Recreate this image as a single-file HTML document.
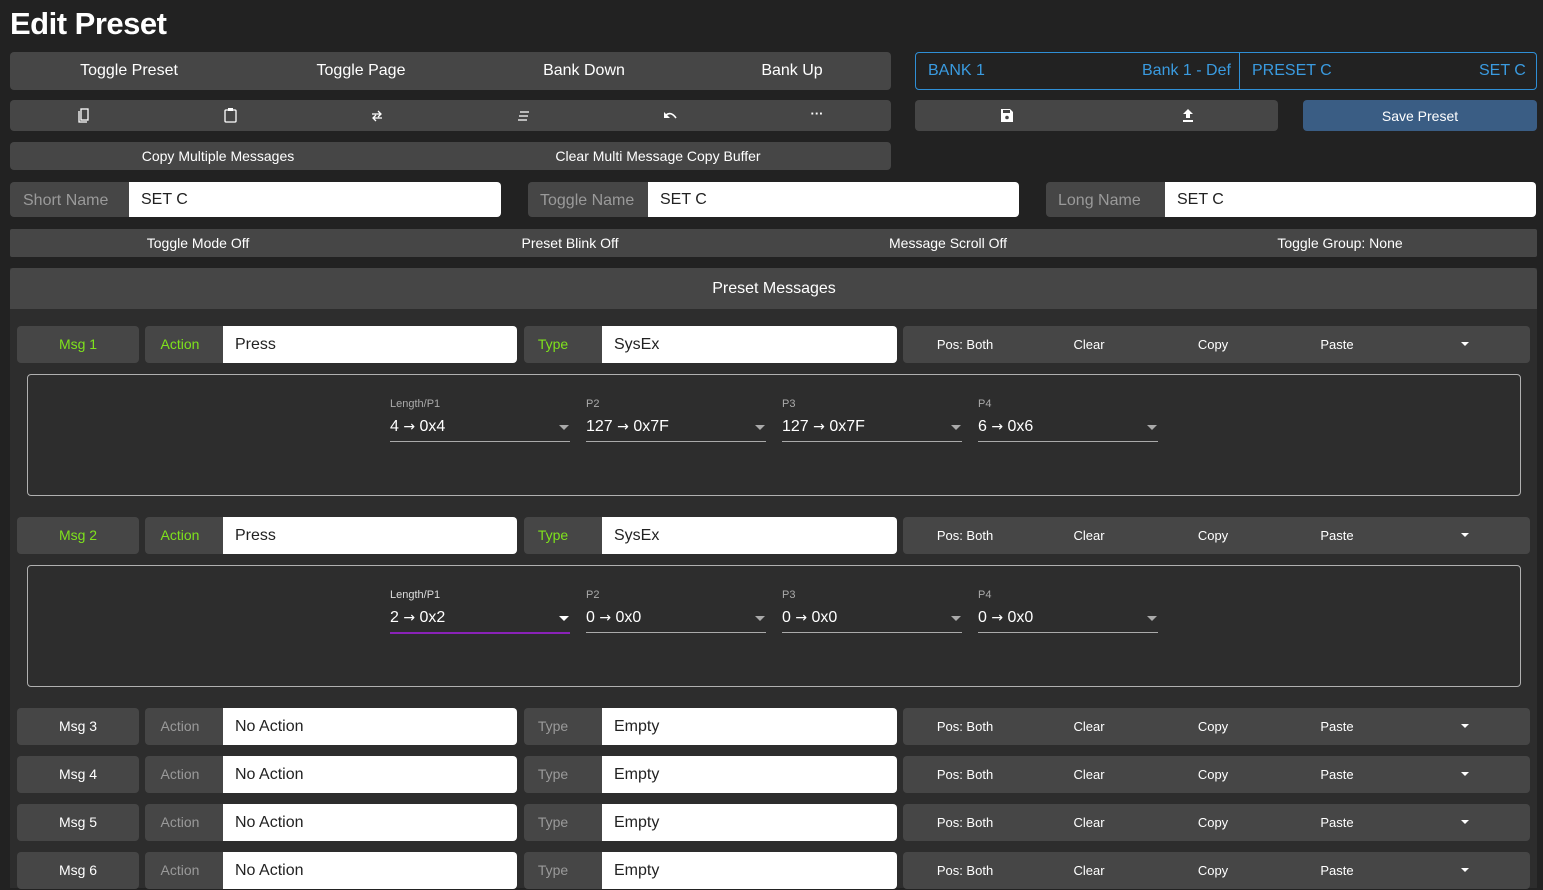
<!DOCTYPE html>
<html><head><meta charset="utf-8"><style>
*{box-sizing:border-box;margin:0;padding:0}
body{width:1543px;height:877px;overflow:hidden;background:#222;font-family:"Liberation Sans",Arial,sans-serif;color:#fff;position:relative}
.a{position:absolute}
.btn{position:absolute;background:#464646;border-radius:4px}
.c{position:absolute;transform:translateX(-50%);white-space:nowrap}
.t16{font-size:16px}
.t14{font-size:14px}
.t13{font-size:13px}
.lbl{position:absolute;background:#464646;border-radius:4px 0 0 4px;color:#9a9a9a;font-size:16px;padding-left:13px;line-height:37px}
.inp{position:absolute;background:#fff;border-radius:0 4px 4px 0;color:#222;font-size:16px;padding-left:12px;line-height:38px}
.g{color:#7ee21c}
.pl{position:absolute;font-size:11px;color:#aaa}
.pv{position:absolute;font-size:16px;color:#fff;white-space:nowrap}
.ar{font-family:"DejaVu Sans",sans-serif;font-size:14px}
.pu{position:absolute;height:1px;background:#aaa}
.car{position:absolute;width:0;height:0;border-left:5px solid transparent;border-right:5px solid transparent;border-top:5px solid #aaa}
.wcar{border-top-color:#fff}
</style></head><body>
<div class="a" style="left:10px;top:6px;font-size:31px;font-weight:bold;letter-spacing:-0.5px">Edit Preset</div>

<div class="btn" style="left:10px;top:52px;width:881px;height:38px"></div>
<div class="c t16" style="left:129px;top:62px">Toggle Preset</div>
<div class="c t16" style="left:361px;top:62px">Toggle Page</div>
<div class="c t16" style="left:584px;top:62px">Bank Down</div>
<div class="c t16" style="left:792px;top:62px">Bank Up</div>

<div class="a" style="left:915px;top:52px;width:622px;height:38px;border:1px solid #2f8fd6;border-radius:4px"></div>
<div class="a" style="left:1239px;top:52px;width:1px;height:38px;background:#2f8fd6"></div>
<div class="a t16" style="left:928px;top:62px;color:#3a9be0">BANK 1</div>
<div class="a t16" style="left:1142px;top:62px;color:#3a9be0">Bank 1 - Def</div>
<div class="a t16" style="left:1252px;top:62px;color:#3a9be0">PRESET C</div>
<div class="a t16" style="left:1479px;top:62px;color:#3a9be0">SET C</div>

<div class="btn" style="left:10px;top:100px;width:881px;height:31px"></div>
<svg class="a" style="left:77px;top:108px" width="14" height="16" viewBox="0 0 14 16"><path d="M2 3V14H10" fill="none" stroke="#fff" stroke-width="1.3"/><rect x="4" y="1" width="7" height="11" fill="none" stroke="#fff" stroke-width="1.3"/></svg>
<svg class="a" style="left:224px;top:107px" width="13" height="16" viewBox="0 0 13 16"><rect x="1" y="3" width="11" height="12" rx="1" fill="none" stroke="#fff" stroke-width="1.3"/><rect x="4" y="1" width="5" height="3" fill="#fff"/></svg>
<svg class="a" style="left:370px;top:110px" width="14" height="12" viewBox="0 0 14 12"><path d="M2 4H11M8 1L11 4 8 7M12 8H3M6 5L3 8 6 11" fill="none" stroke="#fff" stroke-width="1.3"/></svg>
<svg class="a" style="left:517px;top:111px" width="13" height="10" viewBox="0 0 13 10"><path d="M3 1H12M2 5H11M1 9H10" stroke="#fff" stroke-width="1.3"/></svg>
<svg class="a" style="left:663px;top:110px" width="15" height="10" viewBox="0 0 15 10"><path d="M3 5Q8 1 13 8" fill="none" stroke="#fff" stroke-width="1.6"/><path d="M1 2V8H7Z" fill="#fff"/></svg>
<div class="c" style="left:817px;top:106px;font-size:13px;font-weight:bold">···</div>

<div class="btn" style="left:915px;top:100px;width:363px;height:31px"></div>
<svg class="a" style="left:1001px;top:109px" width="12" height="13" viewBox="0 0 12 13"><path d="M0 0H9L12 3V13H0Z" fill="#fff"/><rect x="2" y="1" width="7" height="3" fill="#464646"/><circle cx="6" cy="8.5" r="1.8" fill="#464646"/></svg>
<svg class="a" style="left:1182px;top:109px" width="12" height="13" viewBox="0 0 12 13"><path d="M6 0L11 5H8V9H4V5H1Z" fill="#fff"/><rect x="1" y="11" width="10" height="2" fill="#fff"/></svg>
<div class="btn" style="left:1303px;top:100px;width:234px;height:31px;background:#3a5d84"></div>
<div class="c t14" style="left:1420px;top:108px">Save Preset</div>

<div class="btn" style="left:10px;top:142px;width:881px;height:28px"></div>
<div class="c t14" style="left:218px;top:148px">Copy Multiple Messages</div>
<div class="c t14" style="left:658px;top:148px">Clear Multi Message Copy Buffer</div>

<div class="lbl" style="left:10px;top:182px;width:119px;height:35px;padding-left:13px">Short Name</div>
<div class="inp" style="left:129px;top:182px;width:372px;height:35px;line-height:36px">SET C</div>
<div class="lbl" style="left:528px;top:182px;width:120px;height:35px;padding-left:12px">Toggle Name</div>
<div class="inp" style="left:648px;top:182px;width:371px;height:35px;line-height:36px">SET C</div>
<div class="lbl" style="left:1046px;top:182px;width:119px;height:35px;padding-left:12px">Long Name</div>
<div class="inp" style="left:1165px;top:182px;width:371px;height:35px;line-height:36px">SET C</div>

<div class="btn" style="left:10px;top:229px;width:1527px;height:28px;border-radius:2px"></div>
<div class="c t14" style="left:198px;top:235px">Toggle Mode Off</div>
<div class="c t14" style="left:570px;top:235px">Preset Blink Off</div>
<div class="c t14" style="left:948px;top:235px">Message Scroll Off</div>
<div class="c t14" style="left:1340px;top:235px">Toggle Group: None</div>

<div class="a" style="left:10px;top:268px;width:1527px;height:620px;background:#2d2d2d"></div>
<div class="a" style="left:10px;top:268px;width:1527px;height:41px;background:#464646;border-radius:3px 3px 0 0"></div>
<div class="c t16" style="left:774px;top:280px">Preset Messages</div>

<div id="rows"></div>
<script>
var rows=[[326,'Msg 1',1,'Press','SysEx'],[517,'Msg 2',1,'Press','SysEx'],[708,'Msg 3',0,'No Action','Empty'],[756,'Msg 4',0,'No Action','Empty'],[804,'Msg 5',0,'No Action','Empty'],[852,'Msg 6',0,'No Action','Empty']];
var h='';
rows.forEach(function(r){var y=r[0],g=r[2]?' g':'';var lc=r[2]?'#7ee21c':'#9a9a9a';
h+='<div class="btn" style="left:17px;top:'+y+'px;width:122px;height:37px"></div>';
h+='<div class="c t14'+g+'" style="left:78px;top:'+(y+10)+'px">'+r[1]+'</div>';
h+='<div class="btn" style="left:145px;top:'+y+'px;width:78px;height:37px;border-radius:4px 0 0 4px"></div>';
h+='<div class="c t14" style="left:180px;top:'+(y+10)+'px;color:'+lc+'">Action</div>';
h+='<div class="inp" style="left:223px;top:'+y+'px;width:294px;height:37px">'+r[3]+'</div>';
h+='<div class="btn" style="left:524px;top:'+y+'px;width:78px;height:37px;border-radius:4px 0 0 4px"></div>';
h+='<div class="c t14" style="left:553px;top:'+(y+10)+'px;color:'+lc+'">Type</div>';
h+='<div class="inp" style="left:602px;top:'+y+'px;width:295px;height:37px">'+r[4]+'</div>';
h+='<div class="btn" style="left:903px;top:'+y+'px;width:627px;height:37px"></div>';
h+='<div class="c t13" style="left:965px;top:'+(y+11)+'px">Pos: Both</div>';
h+='<div class="c t13" style="left:1089px;top:'+(y+11)+'px">Clear</div>';
h+='<div class="c t13" style="left:1213px;top:'+(y+11)+'px">Copy</div>';
h+='<div class="c t13" style="left:1337px;top:'+(y+11)+'px">Paste</div>';
h+='<div class="car wcar" style="left:1461px;top:'+(y+16)+'px;border-left-width:4px;border-right-width:4px;border-top-width:4px"></div>';
});
var boxes=[[374,[['4','0x4'],['127','0x7F'],['127','0x7F'],['6','0x6']],0],[565,[['2','0x2'],['0','0x0'],['0','0x0'],['0','0x0']],1]];
var names=['Length/P1','P2','P3','P4'];
boxes.forEach(function(b){var y=b[0];
h+='<div class="a" style="left:27px;top:'+y+'px;width:1494px;height:122px;border:1px solid #b0b0b0;border-radius:4px"></div>';
for(var i=0;i<4;i++){var x=390+196*i;var act=b[2]&&i==0;var v=b[1][i];
h+='<div class="pl" style="left:'+x+'px;top:'+(y+24)+'px;'+(act?'color:#ddd':'')+'">'+names[i]+'</div>';
h+='<div class="pv" style="left:'+x+'px;top:'+(y+44)+'px">'+v[0]+' <span class="ar">→</span> '+v[1]+'</div>';
h+='<div class="pu" style="left:'+x+'px;top:'+(y+67)+'px;width:180px;'+(act?'height:2px;background:#8a22b8':'')+'"></div>';
h+='<div class="car'+(act?' wcar':'')+'" style="left:'+(x+169)+'px;top:'+(y+51)+'px"></div>';}
});
document.getElementById('rows').innerHTML=h;
</script>
</body></html>
